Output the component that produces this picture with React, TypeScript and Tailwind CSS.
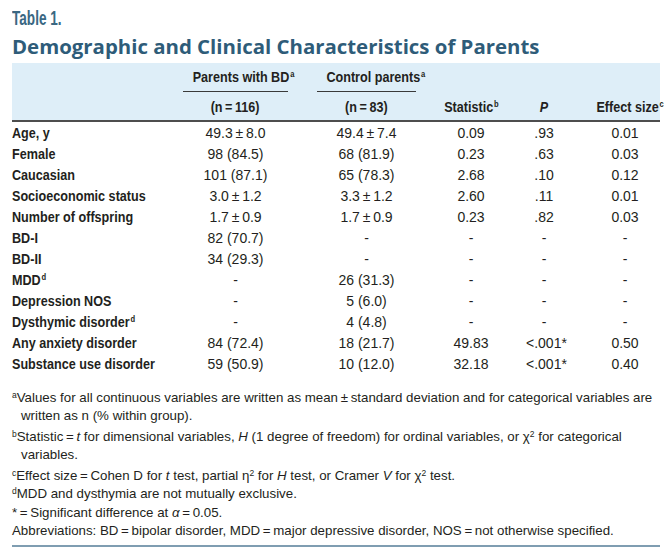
import React from "react";

const T = "\u2009";

type Row = { label: React.ReactNode; a: string; b: string; s: string; p: string; e: string };

const Sup = ({ c }: { c: string }) => (
  <span className="text-[9px] leading-none relative -top-[5px] ml-[1px]">{c}</span>
);

const rows: Row[] = [
  { label: "Age, y", a: `49.3${T}±${T}8.0`, b: `49.4${T}±${T}7.4`, s: "0.09", p: ".93", e: "0.01" },
  { label: "Female", a: "98 (84.5)", b: "68 (81.9)", s: "0.23", p: ".63", e: "0.03" },
  { label: "Caucasian", a: "101 (87.1)", b: "65 (78.3)", s: "2.68", p: ".10", e: "0.12" },
  { label: "Socioeconomic status", a: `3.0${T}±${T}1.2`, b: `3.3${T}±${T}1.2`, s: "2.60", p: ".11", e: "0.01" },
  { label: "Number of offspring", a: `1.7${T}±${T}0.9`, b: `1.7${T}±${T}0.9`, s: "0.23", p: ".82", e: "0.03" },
  { label: "BD-I", a: "82 (70.7)", b: "-", s: "-", p: "-", e: "-" },
  { label: "BD-II", a: "34 (29.3)", b: "-", s: "-", p: "-", e: "-" },
  { label: <>MDD<Sup c="d" /></>, a: "-", b: "26 (31.3)", s: "-", p: "-", e: "-" },
  { label: "Depression NOS", a: "-", b: "5 (6.0)", s: "-", p: "-", e: "-" },
  { label: <>Dysthymic disorder<Sup c="d" /></>, a: "-", b: "4 (4.8)", s: "-", p: "-", e: "-" },
  { label: "Any anxiety disorder", a: "84 (72.4)", b: "18 (21.7)", s: "49.83", p: "<.001*", e: "0.50" },
  { label: "Substance use disorder", a: "59 (50.9)", b: "10 (12.0)", s: "32.18", p: "<.001*", e: "0.40" },
];

const cond = "font-['Liberation_Sans','Arial',sans-serif] font-bold";
const condL = `${cond} inline-block whitespace-nowrap scale-x-[0.84] origin-left`;
const condC = `${cond} inline-block whitespace-nowrap scale-x-[0.84] origin-center`;
const body = "font-['Liberation_Sans','Arial',sans-serif]";
const grid = "grid grid-cols-[171px_105px_29px_99px_110px_36px_28px_70px]";

const FSup = ({ c }: { c: string }) => (
  <span className="text-[8.5px] leading-none relative -top-[4px]">{c}</span>
);

export default function App() {
  return (
    <div className="w-[672px] h-[557px] bg-white text-[#231f20] px-[12px] pt-[7px] overflow-hidden">
      <div className="h-[22px]">
        <span className={`${cond} inline-block whitespace-nowrap origin-left text-[20px] leading-[22px] text-[#3a6883] scale-x-[0.68]`}>Table 1.</span>
      </div>
      <div className="font-['Open_Sans',sans-serif] font-bold text-[20.4px] leading-[28px] text-[#2e5c79] mt-[3px] whitespace-nowrap">
        Demographic and Clinical Characteristics of Parents
      </div>
      <div className="w-[648px] mt-[3px]">
        <div className="bg-[#deeef8] border-b-2 border-[#4d4d4d] h-[59px]">
          <div className={`${grid} h-[29px] text-[15px]`}>
            <div />
            <div className="text-center border-b border-[#3a3a3a] pt-[4px] leading-[18px]">
              <span className={condC}>Parents with BD<Sup c="a" /></span>
            </div>
            <div />
            <div className="text-center border-b border-[#3a3a3a] pt-[4px] leading-[18px]">
              <span className={condC}>Control parents<Sup c="a" /></span>
            </div>
          </div>
          <div className={`${grid} h-[28px] items-center text-[15px] leading-[18px]`}>
            <div />
            <div className="text-center"><span className={condC}>(n{T}={T}116)</span></div>
            <div />
            <div className="text-center"><span className={condC}>(n{T}={T}83)</span></div>
            <div className="text-center">
              <span className={condC}>Statistic<Sup c="b" /></span>
            </div>
            <div className="text-center"><span className={`${condC} italic`}>P</span></div>
            <div />
            <div className="text-center">
              <span className={condC}>Effect size<Sup c="c" /></span>
            </div>
          </div>
        </div>
        <div>
          {rows.map((r, i) => (
            <div key={i} className={`${grid} h-[21px] items-center text-[14px] leading-[18px]`}>
              <div className="text-[15px]"><span className={condL}>{r.label}</span></div>
              <div className={`${body} text-center`}>{r.a}</div>
              <div />
              <div className={`${body} text-center`}>{r.b}</div>
              <div className={`${body} text-center`}>{r.s}</div>
              <div className={`${body} text-center whitespace-nowrap`}>{r.p}</div>
              <div />
              <div className={`${body} text-center`}>{r.e}</div>
            </div>
          ))}
        </div>
        <div className={`${body} text-[13.3px] leading-[18px] mt-[15px] pb-[5px] border-b-2 border-[#7f9db1]`}>
          <p className="pl-[9px] -indent-[9px]">
            <FSup c="a" />Values for all continuous variables are written as mean{T}±{T}standard deviation and for categorical variables are written as n (% within group).
          </p>
          <p className="pl-[9px] -indent-[9px] mt-[3px]">
            <FSup c="b" />Statistic{T}={T}<i>t</i> for dimensional variables, <i>H</i> (1 degree of freedom) for ordinal variables, or χ<FSup c="2" /> for categorical variables.
          </p>
          <p className="pl-[9px] -indent-[9px] mt-[3px]">
            <FSup c="c" />Effect size{T}={T}Cohen D for <i>t</i> test, partial η<FSup c="2" /> for <i>H</i> test, or Cramer <i>V</i> for χ<FSup c="2" /> test.
          </p>
          <p>
            <FSup c="d" />MDD and dysthymia are not mutually exclusive.
          </p>
          <p className="mt-[1px]">*{T}={T}Significant difference at <i>α</i>{T}={T}0.05.</p>
          <p>Abbreviations: BD{T}={T}bipolar disorder, MDD{T}={T}major depressive disorder, NOS{T}={T}not otherwise specified.</p>
        </div>
      </div>
    </div>
  );
}
